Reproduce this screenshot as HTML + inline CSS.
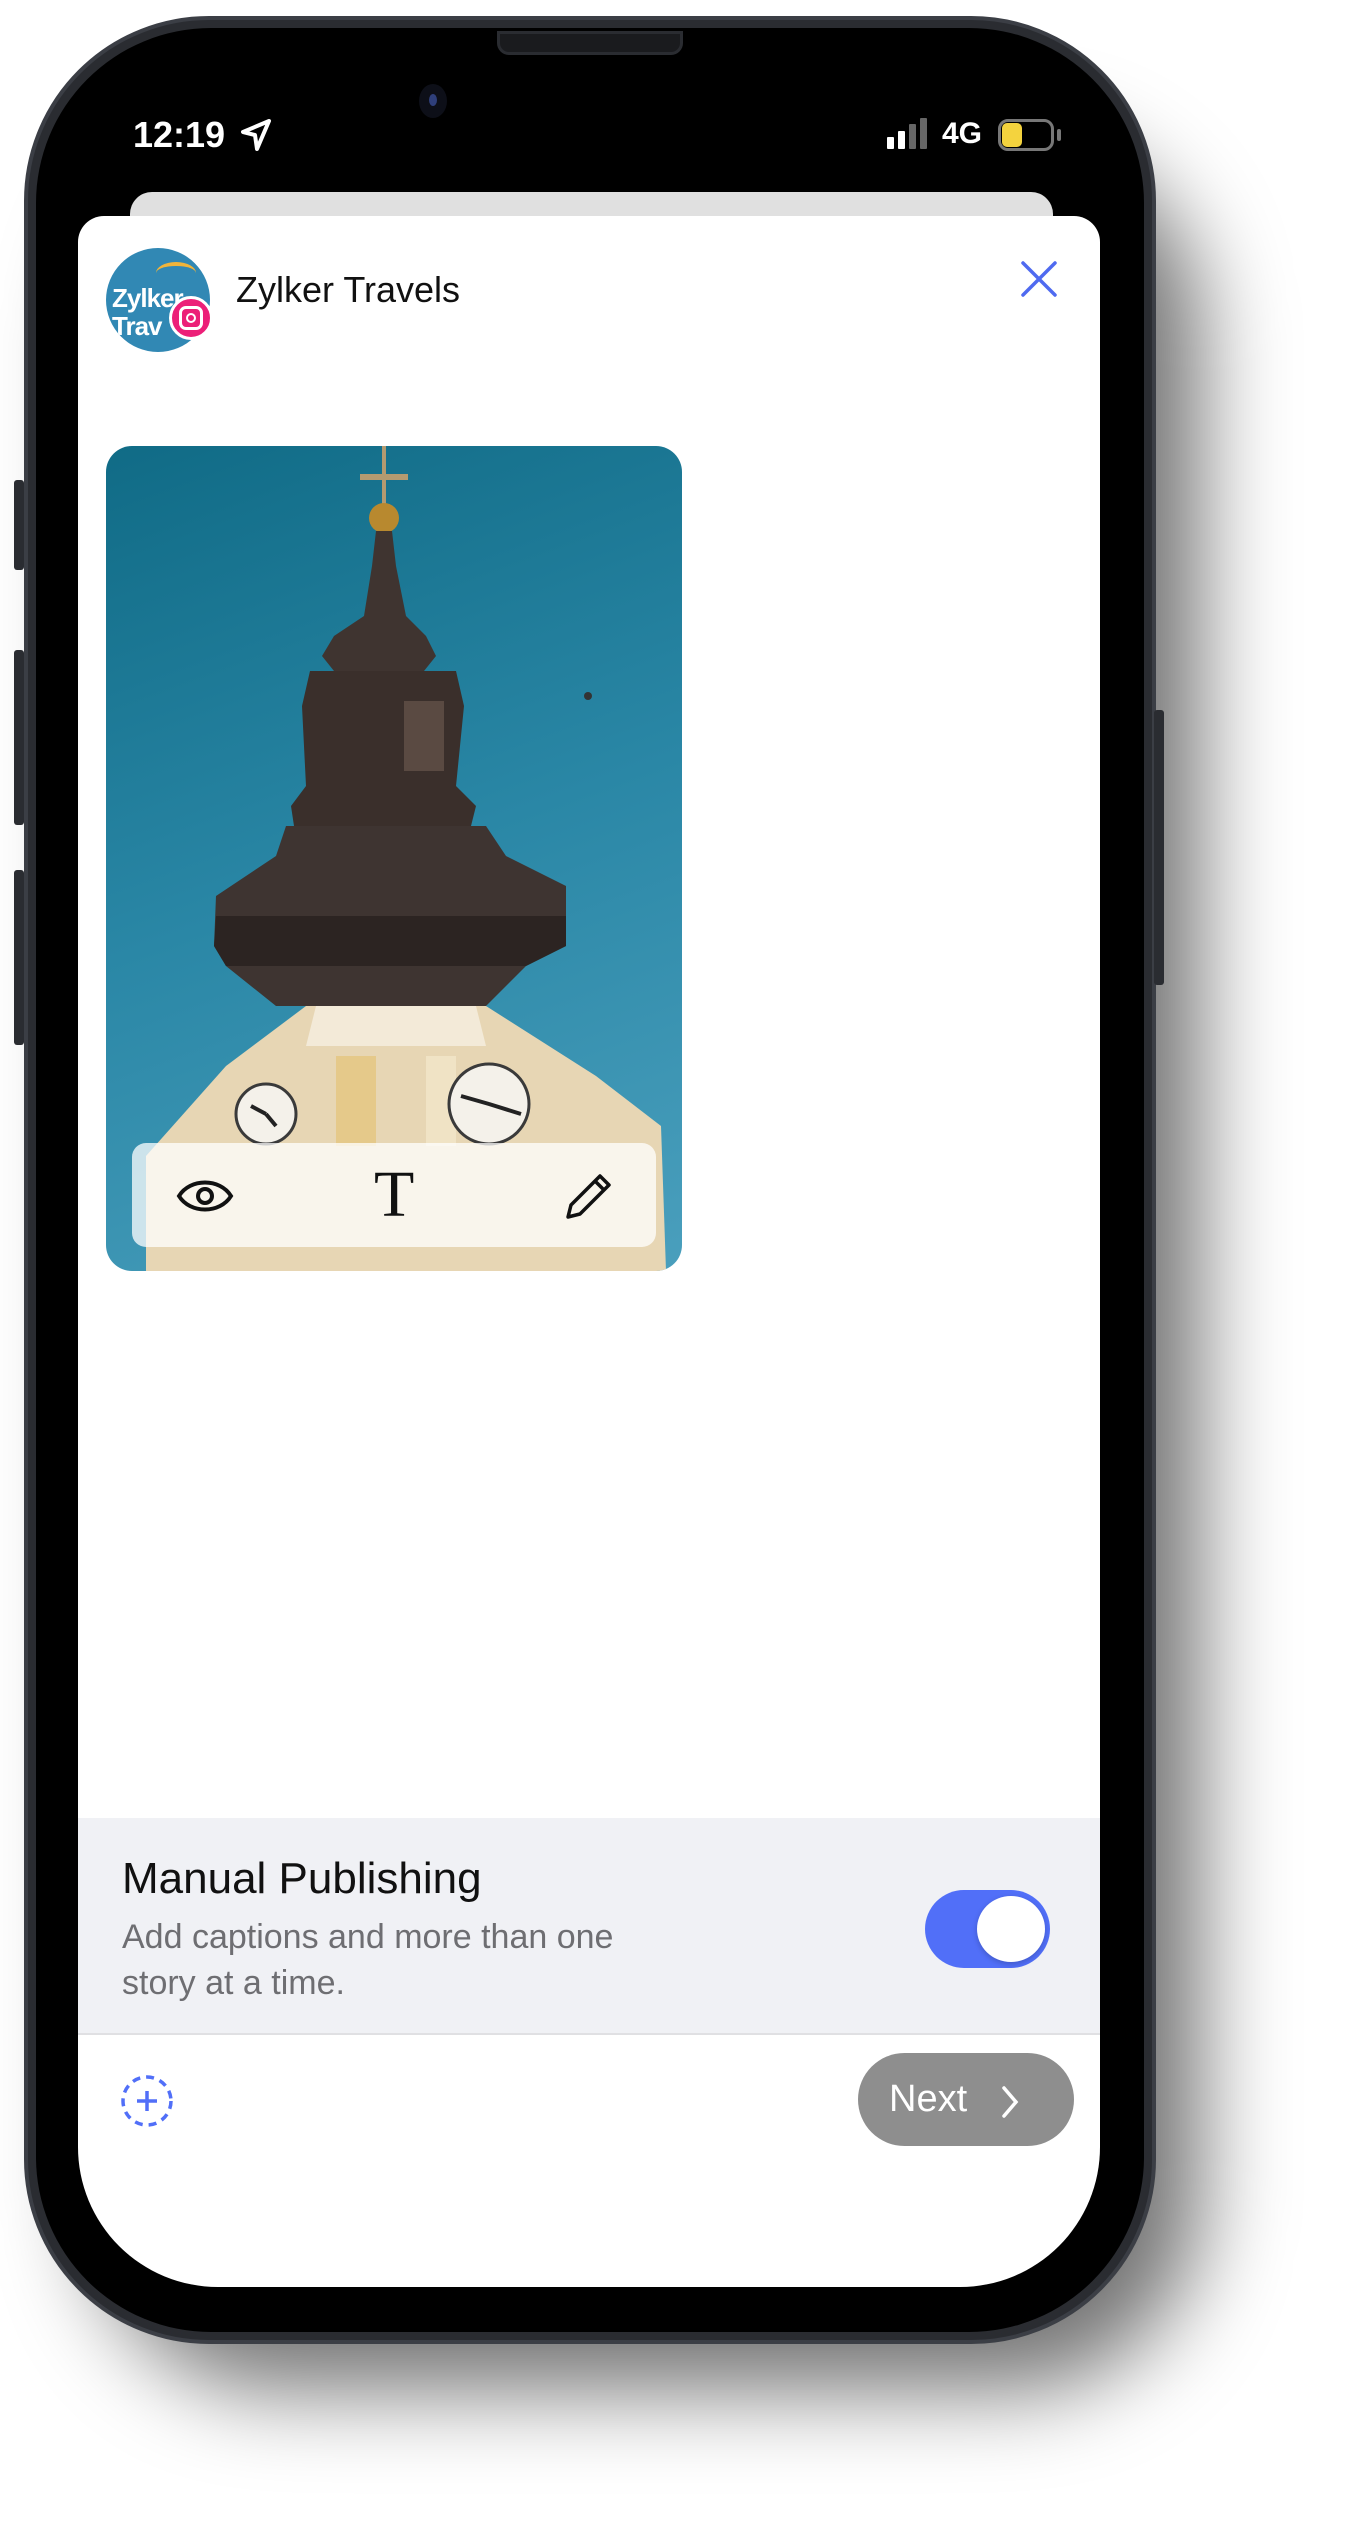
<!DOCTYPE html>
<html><head><meta charset="utf-8"><style>
*{margin:0;padding:0;box-sizing:border-box}
body{width:1351px;height:2545px;background:#fff;position:relative;overflow:hidden;font-family:"Liberation Sans",sans-serif}
.abs{position:absolute}
.shadow{left:90px;top:140px;width:1110px;height:2250px;border-radius:190px;background:rgba(0,0,0,0.55);filter:blur(45px)}
.phone{left:24px;top:16px;width:1132px;height:2328px;border-radius:185px;background:#2a2c31;border:4px solid #3b3e45}
.bezel{left:36px;top:28px;width:1108px;height:2304px;border-radius:175px;background:#000}
.screen{left:78px;top:216px;width:1022px;height:2071px;background:#fff;border-radius:26px 26px 140px 140px;overflow:hidden}
</style></head><body>
<div class="abs shadow"></div>
<div class="abs phone"></div>
<div class="abs bezel"></div>
<div class="abs" style="left:14px;top:480px;width:10px;height:90px;background:#2a2c31;border-radius:3px"></div>
<div class="abs" style="left:14px;top:650px;width:10px;height:175px;background:#2a2c31;border-radius:3px"></div>
<div class="abs" style="left:14px;top:870px;width:10px;height:175px;background:#2a2c31;border-radius:3px"></div>
<div class="abs" style="left:1154px;top:710px;width:10px;height:275px;background:#2a2c31;border-radius:3px"></div>
<div class="abs" style="left:497px;top:31px;width:186px;height:24px;background:#1a1b1e;border-radius:0 0 12px 12px;border:3px solid #2a2c31"></div>
<div class="abs" style="left:419px;top:84px;width:28px;height:34px;background:#0d0f18;border-radius:50%"></div>
<div class="abs" style="left:429px;top:94px;width:8px;height:12px;background:#2f3f7a;border-radius:50%"></div>
<div class="abs" style="left:133px;top:114px;color:#fff;font-size:36px;font-weight:bold">12:19</div>
<svg class="abs" style="left:240px;top:118px" width="32" height="34" viewBox="0 0 32 34"><path d="M29 3 L3 14 L15 17 L17 31 Z" fill="none" stroke="#fff" stroke-width="4" stroke-linejoin="round"/></svg>
<div class="abs" style="left:887px;top:137px;width:7px;height:12px;background:#fff;border-radius:1px"></div>
<div class="abs" style="left:898px;top:131px;width:7px;height:18px;background:#fff;border-radius:1px"></div>
<div class="abs" style="left:909px;top:124px;width:7px;height:25px;background:#666;border-radius:1px"></div>
<div class="abs" style="left:920px;top:118px;width:7px;height:31px;background:#666;border-radius:1px"></div>
<div class="abs" style="left:942px;top:117px;color:#fff;font-size:30px;font-weight:bold">4G</div>
<div class="abs" style="left:998px;top:119px;width:56px;height:32px;border:3px solid #777;border-radius:10px"></div>
<div class="abs" style="left:1002px;top:123px;width:20px;height:24px;background:#f4d33e;border-radius:5px"></div>
<div class="abs" style="left:1057px;top:129px;width:4px;height:12px;background:#777;border-radius:2px"></div>
<div class="abs" style="left:130px;top:192px;width:923px;height:60px;background:#e0e0e0;border-radius:22px"></div>
<div class="abs screen">
  <div class="abs" style="left:28px;top:32px;width:104px;height:104px;border-radius:50%;background:#3188b4;overflow:hidden">
    <div class="abs" style="left:6px;top:36px;color:#fff;font-weight:bold;font-size:26px;line-height:28px;letter-spacing:-1px">Zylker<br>Trav</div>
    <div class="abs" style="left:50px;top:14px;width:40px;height:22px;border-top:4px solid #f0b43a;border-radius:50% 50% 0 0"></div>
  </div>
  <div class="abs" style="left:91px;top:80px;width:44px;height:44px;border-radius:50%;background:#ec1f78;border:3px solid #fff"></div>
  <div class="abs" style="left:101px;top:90px;width:24px;height:24px;border:3px solid #fff;border-radius:7px"></div>
  <div class="abs" style="left:108px;top:97px;width:10px;height:10px;border:2.5px solid #fff;border-radius:50%"></div>
  <div class="abs" style="left:158px;top:53px;font-size:36px;color:#111">Zylker Travels</div>
  <svg class="abs" style="left:941px;top:43px" width="40" height="40" viewBox="0 0 40 40"><path d="M4 4 L36 36 M36 4 L4 36" stroke="#4f6af0" stroke-width="3.5" stroke-linecap="round"/></svg>
  <div class="abs" style="left:28px;top:230px;width:576px;height:825px;border-radius:26px;overflow:hidden;background:linear-gradient(160deg,#106b86 0%,#2a87a6 50%,#4a9fbd 100%)">
    <svg width="576" height="825" viewBox="0 0 576 825">
      <path d="M276 0 L280 0 L280 28 L302 28 L302 34 L280 34 L280 60 L276 60 L276 34 L254 34 L254 28 L276 28 Z" fill="#b49a70"/>
      <circle cx="278" cy="72" r="15" fill="#b8892f"/>
      <path d="M270 85 L286 85 L290 120 L300 170 L320 190 L330 210 L318 225 L228 225 L216 210 L228 190 L258 170 L266 120 Z" fill="#3f3430"/>
      <path d="M204 225 L350 225 L358 260 L350 340 L370 360 L365 380 L188 380 L185 360 L200 340 L196 260 Z" fill="#3a2f2b"/>
      <rect x="298" y="255" width="40" height="70" fill="#5a4a42"/>
      <path d="M180 380 L380 380 L400 410 L460 440 L460 500 L420 520 L380 560 L170 560 L120 520 L108 500 L110 450 L170 410 Z" fill="#3e3431"/>
      <path d="M110 470 L460 470 L460 500 L420 520 L120 520 L108 500 Z" fill="#2c2422"/>
      <path d="M40 825 L40 710 L120 620 L200 560 L380 560 L490 630 L555 680 L560 825 Z" fill="#e7d6b4"/>
      <path d="M210 560 L370 560 L380 600 L200 600 Z" fill="#f3ead8"/>
      <rect x="230" y="610" width="40" height="90" fill="#e5c98a"/>
      <rect x="320" y="610" width="30" height="90" fill="#f0e3c5"/>
      <circle cx="160" cy="668" r="30" fill="#f4f1ea" stroke="#3a3a3a" stroke-width="3"/>
      <circle cx="383" cy="658" r="40" fill="#f4f1ea" stroke="#3a3a3a" stroke-width="3"/>
      <path d="M160 668 L145 660 M160 668 L170 680 M383 658 L355 650 M383 658 L415 668" stroke="#222" stroke-width="4"/>
      <circle cx="482" cy="250" r="4" fill="#333"/>
    </svg>
    <div class="abs" style="left:26px;top:697px;width:524px;height:104px;border-radius:14px;background:rgba(255,255,255,0.75)"></div>
    <svg class="abs" style="left:70px;top:726px" width="58" height="48" viewBox="0 0 58 48"><path d="M3 24 C14 6 44 6 55 24 C44 42 14 42 3 24 Z" fill="none" stroke="#111" stroke-width="4"/><circle cx="29" cy="24" r="7" fill="none" stroke="#111" stroke-width="4"/></svg>
    <div class="abs" style="left:268px;top:716px;font-family:'Liberation Serif',serif;font-size:66px;line-height:66px;color:#111">T</div>
    <svg class="abs" style="left:456px;top:723px" width="54" height="54" viewBox="0 0 54 54"><path d="M6 48 L9 36 L38 7 L47 16 L18 45 Z M33 12 L42 21" fill="none" stroke="#111" stroke-width="3.5" stroke-linejoin="round"/></svg>
  </div>
  <div class="abs" style="left:0;top:1602px;width:1022px;height:217px;background:#f0f1f5;border-bottom:2px solid #e0e0e3"></div>
  <div class="abs" style="left:44px;top:1638px;font-size:44px;color:#111">Manual Publishing</div>
  <div class="abs" style="left:44px;top:1698px;font-size:34px;line-height:46px;color:#6e6e72">Add captions and more than one<br>story at a time.</div>
  <div class="abs" style="left:847px;top:1674px;width:125px;height:78px;border-radius:39px;background:#516ff8"></div>
  <div class="abs" style="left:899px;top:1680px;width:68px;height:66px;border-radius:50%;background:#fff;box-shadow:0 2px 6px rgba(0,0,0,.2)"></div>
  <svg class="abs" style="left:41px;top:1857px" width="56" height="56" viewBox="0 0 56 56"><circle cx="28" cy="28" r="24" fill="none" stroke="#516ff8" stroke-width="3.5" stroke-dasharray="8 6"/><path d="M28 18 V38 M18 28 H38" stroke="#516ff8" stroke-width="3.5"/></svg>
  <div class="abs" style="left:780px;top:1837px;width:216px;height:93px;border-radius:47px;background:#8e8e8e"></div>
  <div class="abs" style="left:811px;top:1862px;font-size:38px;color:#fff">Next</div>
  <svg class="abs" style="left:920px;top:1868px" width="24" height="36" viewBox="0 0 24 36"><path d="M6 4 L18 18 L6 32" fill="none" stroke="#fff" stroke-width="3.5" stroke-linecap="round"/></svg>
</div>
</body></html>
